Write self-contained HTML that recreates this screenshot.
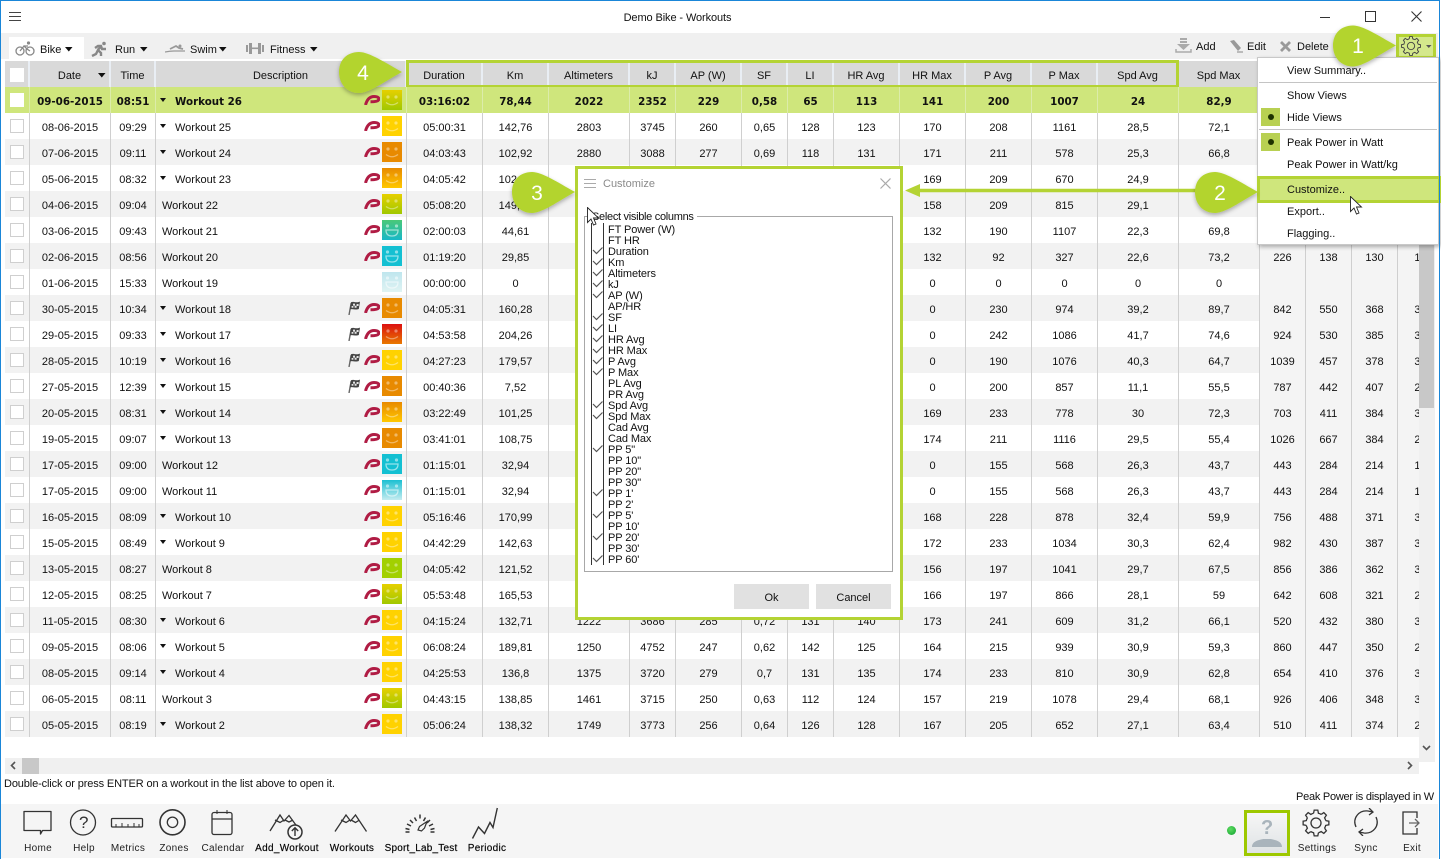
<!DOCTYPE html>
<html><head><meta charset="utf-8"><title>Demo Bike - Workouts</title>
<style>
html,body{margin:0;padding:0;background:#fff}
body{width:1441px;height:858px;overflow:hidden;position:relative;font:11px/14px "Liberation Sans",sans-serif;color:#111}
.a{position:absolute;white-space:nowrap}
svg{display:block}
#win{position:absolute;left:0;top:0;width:1438px;height:858px;border:solid #1a86d8;border-width:1px 1px 0 1px;box-sizing:content-box;pointer-events:none}
table{border-collapse:separate;border-spacing:0;table-layout:fixed;width:1445px}
#wrap{position:absolute;left:5px;top:87px;width:1414px;height:651px;overflow:hidden}
#wrap tr{height:26px}
#wrap td{padding:5px 0 1px;text-align:center;border-right:1px solid #cfcfcf;line-height:20px;height:26px;box-sizing:border-box;overflow:hidden;white-space:nowrap;position:relative;background:#fff}
#wrap tr:nth-child(odd) td{background:#f2f2f2}
#wrap tr:first-child td{background:#cfe67c;font:bold 10.3px/20px "DejaVu Sans",sans-serif;color:#111;border-right-color:#dcecaa}
#wrap tr td:nth-child(n+18){background:#f4f4f4}
#wrap td.d{text-align:left;padding-left:6px}
#wrap td.e{padding-left:19px}
#wrap td.e:before{content:"";position:absolute;left:4px;top:11px;border:solid transparent;border-width:4px 3.5px 0;border-top-color:#111}
i.c{position:absolute;left:5px;top:6px;width:12px;height:12px;border:1px solid #cfcfcf;background:#fff}
tr:first-child i.c{border-color:#fff}
svg.p{position:absolute;left:208px;top:8px;width:16px;height:10px}
span.f{position:absolute;left:226px;top:3px;width:20px;height:20px;display:block}
span.f svg{width:20px;height:20px}
svg.k{position:absolute;left:192px;top:6px;width:12px;height:14px}
.y{background:#ffd200}.o{background:#e88a00}.oy{background:linear-gradient(#e88a00,#ffc800)}.yg{background:linear-gradient(#e6d000,#a0c800)}
.g{background:#a2d000}.gt{background:linear-gradient(#4ac878,#18b8c8)}.t{background:#14c0d2}.pt{background:linear-gradient(#bfe6ee,#dff3f3)}
.r{background:linear-gradient(#dc1010,#e87800)}.tp{background:linear-gradient(#1cc0d2,#c4ecf0)}
.h{position:absolute;top:61px;height:26px;background:#d9d9d9;text-align:center;line-height:30px;border-right:2px solid #e9eef4;box-sizing:border-box;white-space:nowrap}
.m{position:absolute;left:1287px;white-space:nowrap;line-height:14px;font-size:11px}
.ln{position:absolute;left:1259px;width:178px;height:1px;background:#c4c4c4}
.lb{position:absolute;top:842px;font-size:10px;letter-spacing:.3px;line-height:14px;transform:translateX(-50%);white-space:nowrap;color:#222}
.lb.s{color:#000;-webkit-text-stroke:.15px #000}
#cols div{height:11px;line-height:11px}
</style></head><body>
<svg width="0" height="0" style="position:absolute">
<defs>
<symbol id="P" viewBox="0 0 16 10"><path d="M1.500 10C3 4.500 5.500 1.500 10 1.500c4 0 5.500 1.500 4.500 3.500-1 1.800-5.500 1.800-8 1.800" fill="none" stroke="#b01c44" stroke-width="3"/></symbol>
<symbol id="s" viewBox="0 0 20 20"><g fill="#fff" fill-opacity=".4"><circle cx="6" cy="7" r="1.6"/><circle cx="14" cy="7" r="1.6"/></g><path d="M4 12.5q6 4.5 12 0" fill="none" stroke="#fff" stroke-opacity=".4" stroke-width="1.3"/></symbol>
<symbol id="w" viewBox="0 0 20 20"><g fill="#fff" fill-opacity=".5"><circle cx="5.5" cy="6" r="1.6"/><circle cx="14.5" cy="6" r="1.6"/></g><path d="M4 10h12q0 6-6 6t-6-6z" fill="none" stroke="#fff" stroke-opacity=".55" stroke-width="1.3"/></symbol>
<symbol id="F" viewBox="0 0 12 14"><path d="M1 14L3.200 2" stroke="#666" stroke-width="1.400"/><path d="M3 1.200C5.500 0 8 2.200 12 .6L10.800 8C7.500 9.400 5 7.400 1.800 8.400z" fill="#444"/><path d="M5 2.600h2v2H5zM8.600 3h2v2h-2zM6.600 4.800h2v2h-2zM3.600 5h1.800v1.800H3.600z" fill="#e4e4e4"/></symbol>
<g id="tooth"><path d="M9.7-2.42L12.87-1.81V1.81L9.7 2.42A10 10 0 0 1 8.57 5.15" fill="none" stroke="currentColor" stroke-width="1.3"/></g>
<symbol id="G" viewBox="-15 -15 30 30" overflow="visible"><use href="#tooth"/><use href="#tooth" transform="rotate(45)"/><use href="#tooth" transform="rotate(90)"/><use href="#tooth" transform="rotate(135)"/><use href="#tooth" transform="rotate(180)"/><use href="#tooth" transform="rotate(225)"/><use href="#tooth" transform="rotate(270)"/><use href="#tooth" transform="rotate(315)"/><circle r="5" fill="none" stroke="currentColor" stroke-width="1.3"/></symbol>
<symbol id="B" viewBox="0 0 63 41"><path d="M20 0C30 0 45 10 63 20 45 30 30 41 20 41 8 41 0 32 0 20 0 8 8 0 20 0z" fill="#b3d42f"/></symbol>
<filter id="ds" x="-20%" y="-20%" width="140%" height="150%"><feDropShadow dx="0" dy="2" stdDeviation="2" flood-color="#000" flood-opacity=".3"/></filter>
</defs></svg>

<!-- title bar -->
<div class="a" style="left:9px;top:12px;width:12px;height:9px;border-top:1px solid #444;border-bottom:1px solid #444;box-sizing:border-box"></div>
<div class="a" style="left:9px;top:16px;width:12px;height:1px;background:#444"></div>
<div class="a" style="left:0;width:1441px;top:11px;text-align:center;padding-right:86px;box-sizing:border-box;letter-spacing:-.1px">Demo Bike - Workouts</div>
<div class="a" style="left:1320px;top:17px;width:10px;height:1px;background:#333"></div>
<div class="a" style="left:1365px;top:11px;width:9px;height:9px;border:1px solid #333"></div>
<svg class="a" style="left:1411px;top:11px" width="11" height="11"><path d="M.5.5l10 10M10.5.5l-10 10" stroke="#333" stroke-width="1.1"/></svg>

<!-- toolbar strip -->
<div class="a" style="left:1px;top:33px;width:1437px;height:26px;background:#f0f0f0"></div>
<div class="a" style="left:9px;top:37px;width:75px;height:22px;background:#fff"></div>
<svg class="a" style="left:15px;top:41px" width="20" height="15" fill="none" stroke="#888" stroke-width="1.3"><circle cx="5" cy="10" r="4"/><circle cx="15" cy="10" r="4"/><path d="M5 10l4-5 3 3 3 2M9 5h4"/><circle cx="13.5" cy="2" r="1.6" fill="#888" stroke="none"/></svg>
<div class="a" style="left:40px;top:43px">Bike</div>
<svg class="a" style="left:65px;top:47px" width="8" height="5"><path d="M0 0h7.5L3.8 4.5z" fill="#111"/></svg>
<svg class="a" style="left:91px;top:41px" width="18" height="16" fill="none" stroke="#888" stroke-width="2.4"><path d="M1 15l4-2 2-4 3 3v3M4 7l3-2 3 0 1 3h4M7 9l3-4"/><circle cx="13" cy="2.5" r="1.8" fill="#888" stroke="none"/></svg>
<div class="a" style="left:115px;top:43px">Run</div>
<svg class="a" style="left:140px;top:47px" width="8" height="5"><path d="M0 0h7.5L3.8 4.5z" fill="#111"/></svg>
<svg class="a" style="left:165px;top:44px" width="20" height="10" fill="none" stroke="#999" stroke-width="1.3"><path d="M0 8q5-1 9-1t11 0" /><path d="M5 5l6-3 3 2 4 1" stroke-width="1.8"/><circle cx="15" cy="2" r="1.5" fill="#999" stroke="none"/></svg>
<div class="a" style="left:190px;top:43px">Swim</div>
<svg class="a" style="left:219px;top:47px" width="8" height="5"><path d="M0 0h7.5L3.8 4.5z" fill="#111"/></svg>
<svg class="a" style="left:246px;top:42px" width="18" height="13" fill="#999"><rect x="0" y="3" width="2" height="7"/><rect x="3" y="1" width="3" height="11"/><rect x="6" y="5.500" width="6" height="1.600"/><rect x="12" y="1" width="3" height="11"/><rect x="16" y="3" width="2" height="7"/></svg>
<div class="a" style="left:270px;top:43px">Fitness</div>
<svg class="a" style="left:310px;top:47px" width="8" height="5"><path d="M0 0h7.500L3.800 4.500z" fill="#111"/></svg>

<svg class="a" style="left:1175px;top:38px" width="17" height="16" fill="#aaa"><path d="M5 0h7v2H5zM5 3h7v2H5zM2 6h13l-6.500 6z"/><path d="M1 11v3h15v-3" fill="none" stroke="#aaa" stroke-width="1.500"/></svg>
<div class="a" style="left:1196px;top:40px">Add</div>
<svg class="a" style="left:1229px;top:39px" width="15" height="15"><path d="M1 2l4-1 7 8-3 3z" fill="#999"/><path d="M8 13h6" stroke="#bbb" stroke-width="2"/></svg>
<div class="a" style="left:1247px;top:40px">Edit</div>
<svg class="a" style="left:1280px;top:41px" width="11" height="11"><path d="M1 1l9 9M10 1l-9 9" stroke="#999" stroke-width="2.800"/></svg>
<div class="a" style="left:1297px;top:40px">Delete</div>

<!-- header -->
<div class="h" style="left:5px;width:25px"></div>
<div class="a" style="left:10px;top:68px;width:14px;height:14px;background:#fff"></div>
<div class="h" style="left:30px;width:81px">Date</div>
<svg class="a" style="left:98px;top:73px" width="8" height="5"><path d="M0 0h7.500L3.800 4.500z" fill="#111"/></svg>
<div class="h" style="left:111px;width:45px">Time</div>
<div class="h" style="left:156px;width:251px">Description</div>
<div class="h" style="left:407px;width:76px">Duration</div>
<div class="h" style="left:483px;width:66px">Km</div>
<div class="h" style="left:549px;width:81px">Altimeters</div>
<div class="h" style="left:630px;width:46px">kJ</div>
<div class="h" style="left:676px;width:66px">AP (W)</div>
<div class="h" style="left:742px;width:46px">SF</div>
<div class="h" style="left:788px;width:46px">LI</div>
<div class="h" style="left:834px;width:66px">HR Avg</div>
<div class="h" style="left:900px;width:66px">HR Max</div>
<div class="h" style="left:966px;width:66px">P Avg</div>
<div class="h" style="left:1032px;width:66px">P Max</div>
<div class="h" style="left:1098px;width:81px">Spd Avg</div>
<div class="h" style="left:1179px;width:81px">Spd Max</div>
<div class="a" style="left:406px;top:60px;width:773px;height:28px;border:3px solid #b4d334;box-sizing:border-box"></div>

<!-- table -->
<div id="wrap"><table>
<colgroup><col style="width:25px"><col style="width:81px"><col style="width:45px"><col style="width:251px"><col style="width:76px"><col style="width:66px"><col style="width:81px"><col style="width:46px"><col style="width:66px"><col style="width:46px"><col style="width:46px"><col style="width:66px"><col style="width:66px"><col style="width:66px"><col style="width:66px"><col style="width:81px"><col style="width:81px"><col style="width:46px"><col style="width:46px"><col style="width:46px"><col style="width:52px"></colgroup>
<tr><td><i class=c></i><td>09-06-2015<td>08:51<td class="d e">Workout 26<svg class=p><use href="#P"/></svg><span class="f yg"><svg><use href="#s"/></svg></span><td>03:16:02<td>78,44<td>2022<td>2352<td>229<td>0,58<td>65<td>113<td>141<td>200<td>1007<td>24<td>82,9<td><td><td><td>
<tr><td><i class=c></i><td>08-06-2015<td>09:29<td class="d e">Workout 25<svg class=p><use href="#P"/></svg><span class="f y"><svg><use href="#s"/></svg></span><td>05:00:31<td>142,76<td>2803<td>3745<td>260<td>0,65<td>128<td>123<td>170<td>208<td>1161<td>28,5<td>72,1<td><td><td><td>
<tr><td><i class=c></i><td>07-06-2015<td>09:11<td class="d e">Workout 24<svg class=p><use href="#P"/></svg><span class="f o"><svg><use href="#s"/></svg></span><td>04:03:43<td>102,92<td>2880<td>3088<td>277<td>0,69<td>118<td>131<td>171<td>211<td>578<td>25,3<td>66,8<td><td><td><td>
<tr><td><i class=c></i><td>05-06-2015<td>08:32<td class="d e">Workout 23<svg class=p><use href="#P"/></svg><span class="f oy"><svg><use href="#s"/></svg></span><td>04:05:42<td>102,92<td><td><td><td><td><td><td>169<td>209<td>670<td>24,9<td><td><td><td><td>
<tr><td><i class=c></i><td>04-06-2015<td>09:04<td class=d>Workout 22<svg class=p><use href="#P"/></svg><span class="f yg"><svg><use href="#s"/></svg></span><td>05:08:20<td>149,32<td><td><td><td><td><td><td>158<td>209<td>815<td>29,1<td><td><td><td><td>
<tr><td><i class=c></i><td>03-06-2015<td>09:43<td class=d>Workout 21<svg class=p><use href="#P"/></svg><span class="f gt"><svg><use href="#w"/></svg></span><td>02:00:03<td>44,61<td><td><td><td><td><td><td>132<td>190<td>1107<td>22,3<td>69,8<td><td><td><td>
<tr><td><i class=c></i><td>02-06-2015<td>08:56<td class=d>Workout 20<svg class=p><use href="#P"/></svg><span class="f t"><svg><use href="#w"/></svg></span><td>01:19:20<td>29,85<td><td><td><td><td><td><td>132<td>92<td>327<td>22,6<td>73,2<td>226<td>138<td>130<td>130
<tr><td><i class=c></i><td>01-06-2015<td>15:33<td class=d>Workout 19<span class="f pt"><svg><use href="#w"/></svg></span><td>00:00:00<td>0<td><td><td><td><td><td><td>0<td>0<td>0<td>0<td>0<td><td><td><td>
<tr><td><i class=c></i><td>30-05-2015<td>10:34<td class="d e">Workout 18<svg class=k><use href="#F"/></svg><svg class=p><use href="#P"/></svg><span class="f o"><svg><use href="#s"/></svg></span><td>04:05:31<td>160,28<td><td><td><td><td><td><td>0<td>230<td>974<td>39,2<td>89,7<td>842<td>550<td>368<td>320
<tr><td><i class=c></i><td>29-05-2015<td>09:33<td class="d e">Workout 17<svg class=k><use href="#F"/></svg><svg class=p><use href="#P"/></svg><span class="f r"><svg><use href="#s"/></svg></span><td>04:53:58<td>204,26<td><td><td><td><td><td><td>0<td>242<td>1086<td>41,7<td>74,6<td>924<td>530<td>385<td>330
<tr><td><i class=c></i><td>28-05-2015<td>10:19<td class="d e">Workout 16<svg class=k><use href="#F"/></svg><svg class=p><use href="#P"/></svg><span class="f y"><svg><use href="#s"/></svg></span><td>04:27:23<td>179,57<td><td><td><td><td><td><td>0<td>190<td>1076<td>40,3<td>64,7<td>1039<td>457<td>378<td>330
<tr><td><i class=c></i><td>27-05-2015<td>12:39<td class="d e">Workout 15<svg class=k><use href="#F"/></svg><svg class=p><use href="#P"/></svg><span class="f o"><svg><use href="#s"/></svg></span><td>00:40:36<td>7,52<td><td><td><td><td><td><td>0<td>200<td>857<td>11,1<td>55,5<td>787<td>442<td>407<td>220
<tr><td><i class=c></i><td>20-05-2015<td>08:31<td class="d e">Workout 14<svg class=p><use href="#P"/></svg><span class="f oy"><svg><use href="#s"/></svg></span><td>03:22:49<td>101,25<td><td><td><td><td><td><td>169<td>233<td>778<td>30<td>72,3<td>703<td>411<td>384<td>360
<tr><td><i class=c></i><td>19-05-2015<td>09:07<td class="d e">Workout 13<svg class=p><use href="#P"/></svg><span class="f o"><svg><use href="#s"/></svg></span><td>03:41:01<td>108,75<td><td><td><td><td><td><td>174<td>211<td>1116<td>29,5<td>55,4<td>1026<td>667<td>384<td>260
<tr><td><i class=c></i><td>17-05-2015<td>09:00<td class=d>Workout 12<svg class=p><use href="#P"/></svg><span class="f t"><svg><use href="#w"/></svg></span><td>01:15:01<td>32,94<td><td><td><td><td><td><td>0<td>155<td>568<td>26,3<td>43,7<td>443<td>284<td>214<td>170
<tr><td><i class=c></i><td>17-05-2015<td>09:00<td class=d>Workout 11<svg class=p><use href="#P"/></svg><span class="f tp"><svg><use href="#w"/></svg></span><td>01:15:01<td>32,94<td><td><td><td><td><td><td>0<td>155<td>568<td>26,3<td>43,7<td>443<td>284<td>214<td>170
<tr><td><i class=c></i><td>16-05-2015<td>08:09<td class="d e">Workout 10<svg class=p><use href="#P"/></svg><span class="f y"><svg><use href="#s"/></svg></span><td>05:16:46<td>170,99<td><td><td><td><td><td><td>168<td>228<td>878<td>32,4<td>59,9<td>756<td>488<td>371<td>300
<tr><td><i class=c></i><td>15-05-2015<td>08:49<td class="d e">Workout 9<svg class=p><use href="#P"/></svg><span class="f y"><svg><use href="#s"/></svg></span><td>04:42:29<td>142,63<td><td><td><td><td><td><td>172<td>233<td>1034<td>30,3<td>62,4<td>982<td>430<td>387<td>300
<tr><td><i class=c></i><td>13-05-2015<td>08:27<td class=d>Workout 8<svg class=p><use href="#P"/></svg><span class="f g"><svg><use href="#s"/></svg></span><td>04:05:42<td>121,52<td><td><td><td><td><td><td>156<td>197<td>1041<td>29,7<td>67,5<td>856<td>386<td>362<td>300
<tr><td><i class=c></i><td>12-05-2015<td>08:25<td class=d>Workout 7<svg class=p><use href="#P"/></svg><span class="f yg"><svg><use href="#s"/></svg></span><td>05:53:48<td>165,53<td><td><td><td><td><td><td>166<td>197<td>866<td>28,1<td>59<td>642<td>608<td>321<td>220
<tr><td><i class=c></i><td>11-05-2015<td>08:30<td class="d e">Workout 6<svg class=p><use href="#P"/></svg><span class="f y"><svg><use href="#s"/></svg></span><td>04:15:24<td>132,71<td>1222<td>3686<td>285<td>0,72<td>131<td>140<td>173<td>241<td>609<td>31,2<td>66,1<td>520<td>432<td>380<td>300
<tr><td><i class=c></i><td>09-05-2015<td>08:06<td class="d e">Workout 5<svg class=p><use href="#P"/></svg><span class="f y"><svg><use href="#s"/></svg></span><td>06:08:24<td>189,81<td>1250<td>4752<td>247<td>0,62<td>142<td>125<td>164<td>215<td>939<td>30,9<td>59,3<td>860<td>447<td>350<td>290
<tr><td><i class=c></i><td>08-05-2015<td>09:14<td class="d e">Workout 4<svg class=p><use href="#P"/></svg><span class="f y"><svg><use href="#s"/></svg></span><td>04:25:53<td>136,8<td>1375<td>3720<td>279<td>0,7<td>131<td>135<td>174<td>233<td>810<td>30,9<td>62,8<td>654<td>410<td>376<td>300
<tr><td><i class=c></i><td>06-05-2015<td>08:11<td class=d>Workout 3<svg class=p><use href="#P"/></svg><span class="f yg"><svg><use href="#s"/></svg></span><td>04:43:15<td>138,85<td>1461<td>3715<td>250<td>0,63<td>112<td>124<td>157<td>219<td>1078<td>29,4<td>68,1<td>926<td>406<td>348<td>300
<tr><td><i class=c></i><td>05-05-2015<td>08:19<td class="d e">Workout 2<svg class=p><use href="#P"/></svg><span class="f y"><svg><use href="#s"/></svg></span><td>05:06:24<td>138,32<td>1749<td>3773<td>256<td>0,64<td>126<td>128<td>167<td>205<td>652<td>27,1<td>63,4<td>510<td>411<td>374<td>270
</table></div>

<!-- scrollbars -->
<div class="a" style="left:1419px;top:61px;width:16px;height:701px;background:#f0f0f0"></div>
<div class="a" style="left:1419px;top:61px;width:15px;height:347px;background:#c8c8c8"></div>
<svg class="a" style="left:1422px;top:745px" width="9" height="6"><path d="M1 1l3.500 3.500L8 1" fill="none" stroke="#555" stroke-width="1.600"/></svg>
<div class="a" style="left:5px;top:758px;width:1414px;height:16px;background:#f0f0f0"></div>
<div class="a" style="left:22px;top:758px;width:17px;height:16px;background:#c8c8c8"></div>
<svg class="a" style="left:10px;top:761px" width="6" height="9"><path d="M5 1L1.500 4.500 5 8" fill="none" stroke="#555" stroke-width="1.600"/></svg>
<svg class="a" style="left:1407px;top:761px" width="6" height="9"><path d="M1 1l3.500 3.500L1 8" fill="none" stroke="#555" stroke-width="1.600"/></svg>

<!-- status -->
<div class="a" style="left:4px;top:777px;letter-spacing:-.13px">Double-click or press ENTER on a workout in the list above to open it.</div>
<div class="a" style="left:1296px;top:790px;letter-spacing:-.25px">Peak Power is displayed in W</div>

<!-- bottom bar -->
<div class="a" style="left:1px;top:804px;width:1437px;height:54px;background:#f5f5f5"></div>
<svg class="a" style="left:0;top:804px" width="520" height="54" fill="none" stroke="#333" stroke-width="1.300">
<path d="M24 7.500h27v19H42.500L40.500 30v-3.500H24z" stroke-linejoin="round"/>
<circle cx="83" cy="18.500" r="12.500"/>
<rect x="111.500" y="14.500" width="31" height="8.500" rx="1"/><path d="M116 23v-3M122 23v-4M128 23v-3M134 23v-4M139 23v-3" stroke-width="1"/>
<circle cx="172.500" cy="18.300" r="12.500" stroke-width="1.600"/><circle cx="172.500" cy="18.300" r="5.200"/>
<path d="M214 8.500h16a2 2 0 0 1 2 2v18a2 2 0 0 1-2 2h-16a2 2 0 0 1-2-2v-18a2 2 0 0 1 2-2zM212 15h20" /><path d="M217 6v4M227 6v4" stroke-width="1"/>
<path d="M270 27L280 11l4 6 5-5.500 8 11M275 16l5 2.500 4-2.500M285 16l4 2 4-2" />
<circle cx="295" cy="28" r="7" stroke-width="1.500" fill="#f5f5f5"/><path d="M295 32v-8M291.800 27l3.200-3.200 3.200 3.200" stroke-width="1.400"/>
<path d="M335 27.500L346 11l4.500 6 5-6 11 16.500M341 16l5 2.500 4-2.500M351 16l4.500 2.500 4-2.500"/>
<g stroke-width="1.500"><path d="M405.500 28h4M405.500 24.500l4 1M407 20l4 2M410 16l3 3M414.500 13.500l2 3.500M420 10.500v4M425.500 13.500l-2 3.500M430 16l-3 3M433 20l-4 2M434.500 24.500l-4 1M434.500 28h-4"/></g>
<path d="M418 26l1.500-3.500 7.500-5-2.500 6.500-3 3z" stroke-width="1.200"/>
<path d="M472.500 34.500L478.500 23l6 6.500 5.500-11 3 5L497.300 4" stroke-width="1.400"/>
</svg>
<div class="a" style="left:79px;top:813px;font-size:17px;line-height:20px;color:#333">?</div>
<div class="lb" style="left:38px">Home</div>
<div class="lb" style="left:84px">Help</div>
<div class="lb" style="left:128px">Metrics</div>
<div class="lb" style="left:174px">Zones</div>
<div class="lb" style="left:223px">Calendar</div>
<div class="lb s" style="left:287px">Add_Workout</div>
<div class="lb s" style="left:352px">Workouts</div>
<div class="lb s" style="left:421px;letter-spacing:.2px">Sport_Lab_Test</div>
<div class="lb s" style="left:487px">Periodic</div>
<div class="lb" style="left:1317px">Settings</div>
<div class="lb" style="left:1366px">Sync</div>
<div class="lb" style="left:1412px">Exit</div>

<div class="a" style="left:1227px;top:826px;width:9px;height:9px;border-radius:50%;background:radial-gradient(circle at 40% 35%,#5ddc60,#10a030)"></div>
<div class="a" style="left:1244px;top:810px;width:46px;height:46px;box-sizing:border-box;border:3px solid #9dc800;background:linear-gradient(#f6f6f6,#dfe3e5)"></div>
<svg class="a" style="left:1247px;top:813px" width="40" height="40"><path d="M5 34c0-6 7-7 11-8h8c4 1 11 2 11 8z" fill="#a9b4bc"/></svg>
<div class="a" style="left:1261px;top:817px;font:bold 20px/22px 'Liberation Sans',sans-serif;color:#a9b4bc">?</div>
<svg class="a" style="left:1301px;top:808px;color:#333" width="30" height="30"><use href="#G"/></svg>
<svg class="a" style="left:1352px;top:808px" width="28" height="28" fill="none" stroke="#333" stroke-width="1.300"><path d="M4 19C0 10 7 2 16 3l5 1M24 9c4 9-3 17-12 16l-5-1"/><path d="M17 0l4 4-4 3M11 28l-4-4 4-3"/></svg>
<svg class="a" style="left:1402px;top:811px" width="20" height="24" fill="none" stroke="#333" stroke-width="1.300"><path d="M15 7V1H1v22h14v-6"/><path d="M7 12h10M13 8l4 4-4 4" stroke="#666"/></svg>

<!-- gear -->
<div class="a" style="left:1396px;top:34px;width:40px;height:25px;box-sizing:border-box;border:3px solid #b4d334;background:#d4e88c"></div>
<svg class="a" style="left:1400px;top:35px;color:#444" width="22" height="22"><use href="#G"/></svg>
<svg class="a" style="left:1426px;top:45px" width="6" height="4"><path d="M0 0h5.500L2.800 3z" fill="#555"/></svg>

<!-- menu -->
<div class="a" style="left:1257px;top:57px;width:182px;height:188px;background:#fff;border:1px solid #c8c8c8;box-sizing:border-box;box-shadow:2px 2px 4px rgba(0,0,0,.3)"></div>
<div class="m" style="top:64px">View Summary..</div>
<div class="ln" style="top:82px"></div>
<div class="m" style="top:89px">Show Views</div>
<div class="a" style="left:1261px;top:108px;width:19px;height:18px;background:#b8d052"></div>
<div class="a" style="left:1268px;top:114px;width:6px;height:6px;border-radius:50%;background:#1e3200"></div>
<div class="m" style="top:111px">Hide Views</div>
<div class="ln" style="top:129px"></div>
<div class="a" style="left:1261px;top:133px;width:19px;height:18px;background:#b8d052"></div>
<div class="a" style="left:1268px;top:139px;width:6px;height:6px;border-radius:50%;background:#1e3200"></div>
<div class="m" style="top:136px">Peak Power in Watt</div>
<div class="m" style="top:158px">Peak Power in Watt/kg</div>
<div class="a" style="left:1257px;top:176px;width:184px;height:27px;box-sizing:border-box;border:3px solid #b4d334;background:#cfe67c"></div>
<div class="m" style="top:183px">Customize..</div>
<div class="m" style="top:205px">Export..</div>
<div class="m" style="top:227px">Flagging..</div>
<svg class="a" style="left:1350px;top:196px" width="14" height="20"><path d="M.5.500v15l3.500-3.500 2.500 6 2.500-1-2.500-6h5z" fill="#fff" stroke="#222" stroke-width=".9"/></svg>

<!-- dialog -->
<div class="a" style="left:575px;top:166px;width:328px;height:454px;box-sizing:border-box;border:3px solid #b4d334;background:#fff"></div>
<div class="a" style="left:584px;top:179px;width:12px;height:9px;border-top:1px solid #aaa;border-bottom:1px solid #aaa;box-sizing:border-box"></div>
<div class="a" style="left:584px;top:183px;width:12px;height:1px;background:#aaa"></div>
<div class="a" style="left:603px;top:177px;color:#8a8a8a">Customize</div>
<svg class="a" style="left:880px;top:178px" width="11" height="11"><path d="M.5.500l10 10M10.500.500l-10 10" stroke="#aaa" stroke-width="1.200"/></svg>
<div class="a" style="left:584px;top:216px;width:309px;height:356px;box-sizing:border-box;border:1px solid #a8a8a8"></div>
<div class="a" style="left:589px;top:210px;padding:0 3px;background:#fff;letter-spacing:-.3px">Select visible columns</div>
<div class="a" style="left:591px;top:223px;width:1px;height:342px;background:#333"></div>
<div class="a" style="left:603px;top:223px;width:1px;height:342px;background:#333"></div>
<svg class="a" style="left:590px;top:240px" width="14" height="330" viewBox="590 240 14 330"><path d="M593 250l3.500 3.500 6-6M593 261l3.500 3.500 6-6M593 272l3.500 3.500 6-6M593 283l3.500 3.500 6-6M593 294l3.500 3.500 6-6M593 316l3.500 3.500 6-6M593 327l3.500 3.500 6-6M593 338l3.500 3.500 6-6M593 349l3.500 3.500 6-6M593 360l3.500 3.500 6-6M593 371l3.500 3.500 6-6M593 404l3.500 3.500 6-6M593 415l3.500 3.500 6-6M593 448l3.500 3.500 6-6M593 492l3.500 3.500 6-6M593 514l3.500 3.500 6-6M593 536l3.500 3.500 6-6M593 558l3.500 3.500 6-6" fill="none" stroke="#555" stroke-width="1.200"/></svg>
<div id="cols" class="a" style="left:608px;top:224.500px;letter-spacing:-.1px">
<div>FT Power (W)</div><div>FT HR</div><div>Duration</div><div>Km</div><div>Altimeters</div><div>kJ</div><div>AP (W)</div><div>AP/HR</div><div>SF</div><div>LI</div><div>HR Avg</div><div>HR Max</div><div>P Avg</div><div>P Max</div><div>PL Avg</div><div>PR Avg</div><div>Spd Avg</div><div>Spd Max</div><div>Cad Avg</div><div>Cad Max</div><div>PP 5"</div><div>PP 10"</div><div>PP 20"</div><div>PP 30"</div><div>PP 1'</div><div>PP 2'</div><div>PP 5'</div><div>PP 10'</div><div>PP 20'</div><div>PP 30'</div><div>PP 60'</div>
</div>
<div class="a" style="left:734px;top:584px;width:75px;height:25px;background:#e1e1e1;text-align:center;line-height:28px">Ok</div>
<div class="a" style="left:816px;top:584px;width:75px;height:25px;background:#e1e1e1;text-align:center;line-height:28px">Cancel</div>
<svg class="a" style="left:587px;top:207px" width="14" height="20"><path d="M.5.500v15l3.500-3.500 2.500 6 2.500-1-2.500-6h5z" fill="#fff" stroke="#222" stroke-width=".9"/></svg>

<!-- callouts -->
<svg class="a" style="left:0;top:0" width="1441" height="858">
<path d="M1196 190.500H918" stroke="#b4d334" stroke-width="3.500"/><path d="M905 190.500l15-6.500v13z" fill="#b4d334"/>
<g filter="url(#ds)"><use href="#B" x="339" y="52" width="63" height="41"/></g>
<g filter="url(#ds)"><use href="#B" x="1333" y="25" width="63" height="42"/></g>
<g filter="url(#ds)"><use href="#B" x="1195" y="172" width="63" height="41"/></g>
<g filter="url(#ds)"><use href="#B" x="512" y="172" width="63" height="41"/></g>
<g fill="#fff" font-family="'Liberation Sans',sans-serif" font-size="21" text-anchor="middle">
<text x="1358" y="53">1</text><text x="1220" y="200">2</text><text x="537" y="200">3</text><text x="363" y="80">4</text></g>
</svg>
<div id="win"></div>
</body></html>
